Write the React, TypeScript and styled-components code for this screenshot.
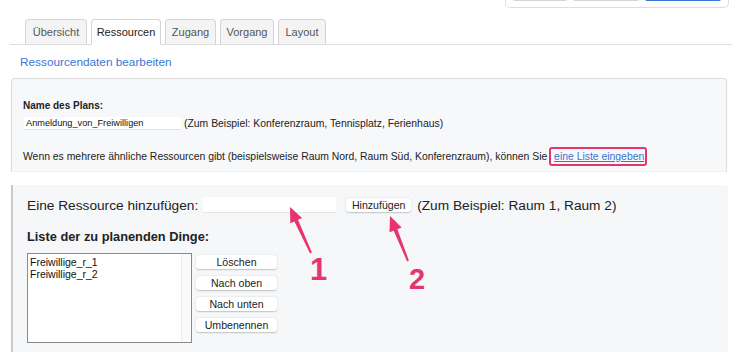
import React from "react";
import styled, { createGlobalStyle } from "styled-components";

const GlobalStyle = createGlobalStyle`
  html, body { margin: 0; padding: 0; background: #ffffff; }
  body { font-family: "Liberation Sans", Arial, Helvetica, sans-serif; color: #222; }
  * { box-sizing: border-box; }
`;

const Page = styled.div`
  position: relative;
  width: 736px;
  height: 352px;
  overflow: hidden;
  background: #fff;
`;

const TopBar = styled.div`
  display: flex;
  justify-content: flex-end;
  padding-right: 7px;
  height: 8px;
`;

const Toolbar = styled.div`
  width: 224px;
  height: 8px;
  border: 1px solid #dedede;
  border-top: none;
  border-radius: 0 0 5px 5px;
  display: flex;
  align-items: flex-end;
  gap: 6px;
  padding: 0 7px 6px 7px;
  overflow: hidden;
`;

const ToolButton = styled.div<{ $w: number; $primary?: boolean }>`
  width: ${(p) => p.$w}px;
  height: 2px;
  border-radius: 0 0 3px 3px;
  background: ${(p) => (p.$primary ? "#3b78d8" : "#d6d6d6")};
`;

const Tabs = styled.div`
  display: flex;
  gap: 4px;
  margin: 11px 4px 0 10px;
  padding-left: 15px;
  border-bottom: 1px solid #dddddd;
`;

const Tab = styled.div<{ $active?: boolean; $w: number }>`
  width: ${(p) => p.$w}px;
  height: 26px;
  margin-bottom: -1px;
  display: flex;
  align-items: center;
  justify-content: center;
  font-size: 11px;
  color: ${(p) => (p.$active ? "#222" : "#555")};
  background: ${(p) => (p.$active ? "#ffffff" : "#f4f4f4")};
  border: 1px solid #d4d4d4;
  border-bottom-color: ${(p) => (p.$active ? "#ffffff" : "#dddddd")};
  border-radius: 4px 4px 0 0;
`;

const SectionTitle = styled.div`
  margin: 10px 0 0 20px;
  font-size: 11.8px;
  line-height: 14px;
  color: #3a76d6;
`;

const PlanPanel = styled.div`
  margin: 9px 0 0 11px;
  width: 716px;
  height: 94px;
  border: 1px solid #dcdcdc;
  border-bottom-color: #f0f0f0;
  border-radius: 4px 4px 0 0;
  background: #f7f8f9;
  padding: 21px 12px 0 11px;
`;

const FieldLabel = styled.div`
  font-size: 10px;
  line-height: 12px;
  font-weight: bold;
  color: #222;
`;

const NameRow = styled.div`
  display: flex;
  align-items: center;
  margin-top: 5px;
  height: 13px;
`;

const NameInput = styled.div`
  width: 157px;
  height: 13px;
  margin-left: 1px;
  background: #fff;
  border-bottom: 1px solid #e2e2e2;
  font-size: 9.2px;
  line-height: 13px;
  padding-left: 2px;
  color: #111;
  white-space: nowrap;
  overflow: hidden;
`;

const Hint = styled.span<{ $size: number; $gap: number }>`
  font-size: ${(p) => p.$size}px;
  color: #222;
  margin-left: ${(p) => p.$gap}px;
  white-space: nowrap;
`;

const InfoLine = styled.div`
  margin-top: 17px;
  font-size: 10.4px;
  line-height: 19px;
  color: #222;
  white-space: nowrap;
  display: flex;
  align-items: center;
`;

const HighlightLink = styled.a`
  display: inline-block;
  margin-left: -1px;
  border: 2px solid #e33670;
  border-radius: 3px;
  padding: 0 1px 0 3px;
  line-height: 15px;
  color: #3b73d1;
  text-decoration: underline;
`;

const ResourcePanel = styled.div`
  margin: 13px 0 0 11px;
  width: 717px;
  height: 170px;
  background: #f5f7f9;
  border-left: 2px solid #c9c9c9;
  border-top-right-radius: 4px;
  padding: 12px 0 0 14px;
`;

const AddRow = styled.div`
  display: flex;
  align-items: center;
  height: 16px;
`;

const BigLabel = styled.span`
  font-size: 13.7px;
  color: #222;
  white-space: nowrap;
`;

const AddInput = styled.div`
  width: 133px;
  height: 16px;
  margin-left: 5px;
  background: #fff;
  border-bottom: 1px solid #e4e4e4;
`;

const SmallButton = styled.div<{ $w: number }>`
  width: ${(p) => p.$w}px;
  height: 14px;
  display: flex;
  align-items: center;
  justify-content: center;
  background: #fff;
  border-radius: 3px;
  box-shadow: 0 0.5px 1.5px rgba(0, 0, 0, 0.22);
  font-size: 10.6px;
  color: #222;
  white-space: nowrap;
`;

const AddButtonWrap = styled.div`
  margin-left: 10px;
`;

const ListTitle = styled.div`
  margin-top: 16px;
  font-size: 12.8px;
  line-height: 16px;
  font-weight: bold;
  color: #222;
`;

const ListArea = styled.div`
  display: flex;
  margin-top: 8px;
`;

const ListBox = styled.div`
  position: relative;
  width: 165px;
  height: 90px;
  border: 1px solid #8a8a8a;
  background: #fff;
  padding: 2px 0 0 2px;
`;

const ScrollTrack = styled.div`
  position: absolute;
  top: 0;
  right: 0;
  width: 10px;
  height: 100%;
  border-left: 1px solid #ececec;
  background: #fafafa;
`;

const ListItem = styled.div`
  font-size: 10.5px;
  line-height: 12px;
  color: #111;
`;

const ButtonColumn = styled.div`
  display: flex;
  flex-direction: column;
  gap: 7px;
  margin: 2px 0 0 4px;
`;

const Overlay = styled.svg`
  position: absolute;
  left: 0;
  top: 0;
  pointer-events: none;
`;

const StepNumber = styled.div<{ $x: number; $y: number; $size: number }>`
  position: absolute;
  left: ${(p) => p.$x}px;
  top: ${(p) => p.$y}px;
  font-size: ${(p) => p.$size}px;
  line-height: 1;
  font-weight: bold;
  color: #e8336f;
`;

function arrow(tx: number, ty: number, sx: number, sy: number) {
  const dx = tx - sx;
  const dy = ty - sy;
  const len = Math.hypot(dx, dy);
  const ux = dx / len;
  const uy = dy / len;
  const nx = -uy;
  const ny = ux;
  const hl = 15;
  const hw = 6.5;
  const bx = tx - ux * hl;
  const by = ty - uy * hl;
  const pts = [
    [tx, ty],
    [bx + nx * hw, by + ny * hw],
    [bx + nx * 2, by + ny * 2],
    [sx + nx * 1, sy + ny * 1],
    [sx - nx * 1, sy - ny * 1],
    [bx - nx * 2, by - ny * 2],
    [bx - nx * hw, by - ny * hw],
  ];
  return pts.map((p) => p.map((v) => v.toFixed(1)).join(",")).join(" ");
}

const tabs = [
  { label: "Übersicht", w: 62 },
  { label: "Ressourcen", w: 70, active: true },
  { label: "Zugang", w: 51 },
  { label: "Vorgang", w: 54 },
  { label: "Layout", w: 48 },
];

const actions = ["Löschen", "Nach oben", "Nach unten", "Umbenennen"];

export default function App() {
  return (
    <Page>
      <GlobalStyle />
      <TopBar>
        <Toolbar>
          <ToolButton $w={54} />
          <ToolButton $w={66} />
          <ToolButton $w={76} $primary />
        </Toolbar>
      </TopBar>
      <Tabs>
        {tabs.map((t) => (
          <Tab key={t.label} $w={t.w} $active={t.active}>
            {t.label}
          </Tab>
        ))}
      </Tabs>
      <SectionTitle>Ressourcendaten bearbeiten</SectionTitle>
      <PlanPanel>
        <FieldLabel>Name des Plans:</FieldLabel>
        <NameRow>
          <NameInput>Anmeldung_von_Freiwilligen</NameInput>
          <Hint $size={10.4} $gap={3}>
            (Zum Beispiel: Konferenzraum, Tennisplatz, Ferienhaus)
          </Hint>
        </NameRow>
        <InfoLine>
          Wenn es mehrere ähnliche Ressourcen gibt (beispielsweise Raum Nord, Raum Süd,
          Konferenzraum), können Sie&nbsp;
          <HighlightLink href="#">eine Liste eingeben</HighlightLink>
        </InfoLine>
      </PlanPanel>
      <ResourcePanel>
        <AddRow>
          <BigLabel>Eine Ressource hinzufügen:</BigLabel>
          <AddInput />
          <AddButtonWrap>
            <SmallButton $w={65}>Hinzufügen</SmallButton>
          </AddButtonWrap>
          <Hint $size={13.7} $gap={6}>
            (Zum Beispiel: Raum 1, Raum 2)
          </Hint>
        </AddRow>
        <ListTitle>Liste der zu planenden Dinge:</ListTitle>
        <ListArea>
          <ListBox>
            <ListItem>Freiwillige_r_1</ListItem>
            <ListItem>Freiwillige_r_2</ListItem>
            <ScrollTrack />
          </ListBox>
          <ButtonColumn>
            {actions.map((a) => (
              <SmallButton key={a} $w={81}>
                {a}
              </SmallButton>
            ))}
          </ButtonColumn>
        </ListArea>
      </ResourcePanel>
      <Overlay width={736} height={352} viewBox="0 0 736 352">
        <polygon points={arrow(290, 207, 311, 253)} fill="#e8336f" />
        <polygon points={arrow(390, 216, 408, 261)} fill="#e8336f" />
      </Overlay>
      <StepNumber $x={310} $y={254} $size={31}>1</StepNumber>
      <StepNumber $x={409} $y={265} $size={29}>2</StepNumber>
    </Page>
  );
}
